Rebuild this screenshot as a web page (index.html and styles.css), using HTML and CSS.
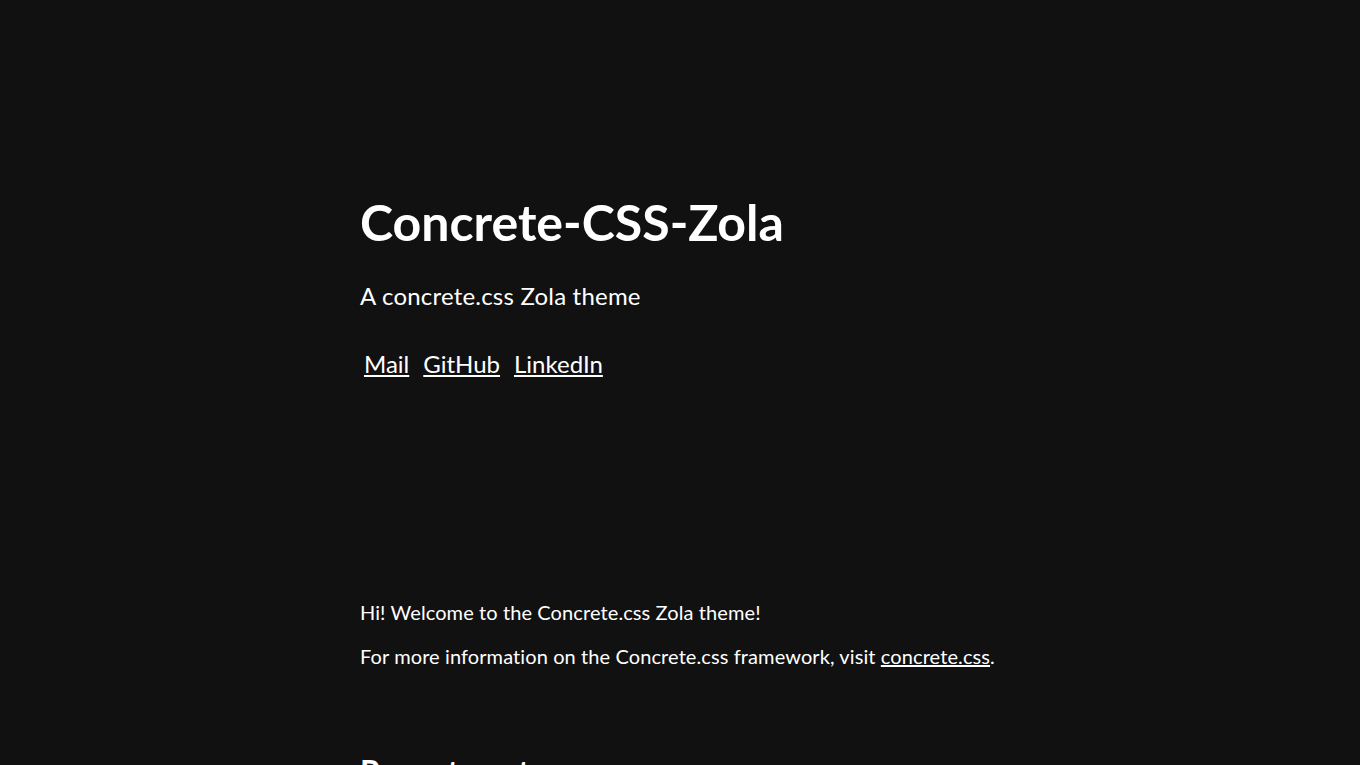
FILE: index.html
```html
<!DOCTYPE html>
<html lang="en">
<head>
<meta charset="utf-8">
<title>Concrete-CSS-Zola</title>
<link rel="stylesheet" href="styles.css">
</head>
<body>
<div class="page">
  <header class="site-header">
    <h1 class="site-title">Concrete-CSS-Zola</h1>
    <p class="site-tagline">A concrete.css Zola theme</p>
    <nav class="site-nav">
      <a href="#">Mail</a>
      <a href="#">GitHub</a>
      <a href="#">LinkedIn</a>
    </nav>
  </header>
  <main class="content">
    <p>Hi! Welcome to the Concrete.css Zola theme!</p>
    <p>For more information on the Concrete.css framework, visit <a href="#">concrete.css</a>.</p>
    <h2 class="section-title">Recent posts</h2>
  </main>
</div>
</body>
</html>
```
FILE: styles.css
```css
html, body {
  margin: 0;
  padding: 0;
  background: #111111;
  color: #ffffff;
}
body {
  font-family: "Lato", "Noto Sans", sans-serif;
  overflow: hidden;
  height: 765px;
}
.page {
  max-width: 640px;
  margin: 0 auto;
}
.site-header {
  padding-top: 192px;
}
.site-title {
  margin: 0;
  font-size: 50px;
  line-height: 60px;
  font-weight: 700;
}
.site-tagline {
  margin: 26px 0 0;
  font-size: 24px;
  line-height: 36px;
  letter-spacing: 0.2px;
}
.site-nav {
  margin-top: 32px;
  font-size: 24px;
  line-height: 36px;
  padding-left: 4px;
  display: flex;
  gap: 14px;
}
a {
  color: #ffffff;
  text-decoration: underline;
}
.content {
  margin-top: 214px;
  font-size: 20px;
  line-height: 32px;
  letter-spacing: 0.1px;
}
.content p {
  margin: 0 0 12px;
}
.section-title {
  margin: 80px 0 0;
  font-size: 32px;
  line-height: 40px;
}
```
